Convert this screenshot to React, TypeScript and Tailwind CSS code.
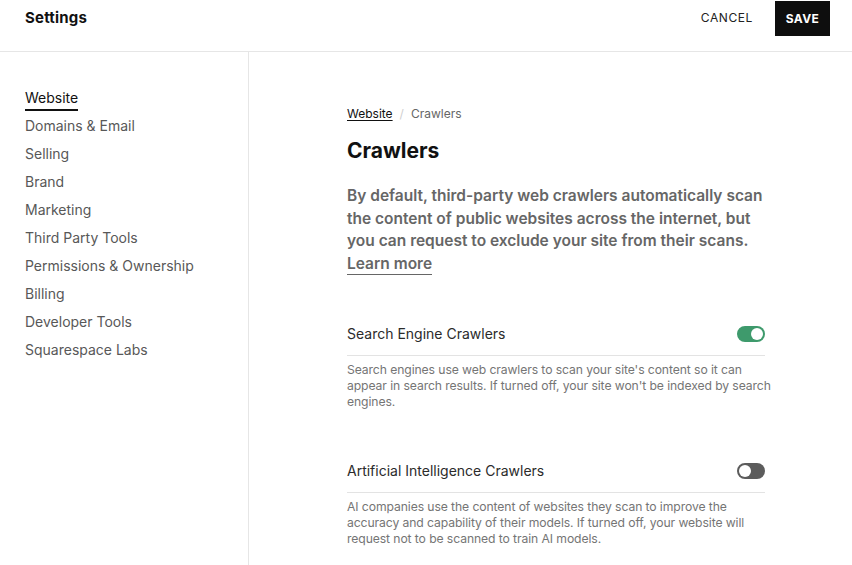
import React from "react";

const nav = [
  "Website",
  "Domains & Email",
  "Selling",
  "Brand",
  "Marketing",
  "Third Party Tools",
  "Permissions & Ownership",
  "Billing",
  "Developer Tools",
  "Squarespace Labs",
];

function Toggle({ on }: { on: boolean }) {
  return (
    <div
      className={`w-[28px] h-[16px] rounded-full flex items-center px-[2px] ${
        on ? "bg-[#3e9a6c] justify-end" : "bg-[#5c5c5c] justify-start"
      }`}
    >
      <div className="w-[12px] h-[12px] rounded-full bg-white" />
    </div>
  );
}

function Section({ title, lines, on }: { title: string; lines: string[]; on: boolean }) {
  return (
    <div>
      <div className="flex items-center justify-between h-[44px] border-b border-[#e3e3e3]">
        <span className="text-[14px] text-[#2b2b2b]">{title}</span>
        <Toggle on={on} />
      </div>
      <p className="mt-[6px] text-[12.2px] tracking-[-0.1px] leading-[16px] text-[#757575]">
        {lines.map((l) => (
          <span key={l} className="block whitespace-nowrap">
            {l}
          </span>
        ))}
      </p>
    </div>
  );
}

export default function App() {
  return (
    <div
      className="w-[852px] h-[565px] bg-white flex flex-col overflow-hidden"
      style={{ fontFamily: "Inter, 'Liberation Sans', sans-serif" }}
    >
      <header className="h-[52px] shrink-0 border-b border-[#e6e6e6] flex items-start justify-between pl-[25px] pr-[22px]">
        <div className="pt-[7px] text-[15px] font-bold text-[#111] tracking-[0.2px]">Settings</div>
        <div className="flex items-start">
          <button className="mt-[9px] mr-[22px] text-[12px] text-[#222] tracking-[0.6px]">CANCEL</button>
          <button className="mt-[1px] w-[55px] h-[35px] bg-[#0e0e0e] text-white text-[12px] font-bold tracking-[0.4px]">
            SAVE
          </button>
        </div>
      </header>
      <div className="flex flex-1 min-h-0">
        <aside className="w-[249px] shrink-0 border-r border-[#e6e6e6] pl-[25px] pt-[36px]">
          <ul className="flex flex-col">
            {nav.map((n, i) => (
              <li key={n} className="h-[28px] flex items-start">
                <span
                  className={`text-[14px] leading-[20px] ${
                    i === 0
                      ? "text-[#111] border-b-2 border-[#111] pb-[1px]"
                      : "text-[#585858]"
                  }`}
                >
                  {n}
                </span>
              </li>
            ))}
          </ul>
        </aside>
        <main className="flex-1 pl-[98px] pt-[54px]">
          <div className="w-[418px]">
            <div className="flex items-center text-[12px] leading-[16px]">
              <span className="text-[#111] underline underline-offset-2">Website</span>
              <span className="mx-[7px] text-[#cfcfcf]">/</span>
              <span className="text-[#666]">Crawlers</span>
            </div>
            <h1 className="mt-[15px] text-[21px] font-bold text-[#111] leading-[28px]">Crawlers</h1>
            <p className="mt-[20px] text-[15.5px] leading-[22.5px] font-semibold text-[#666] w-[430px]">
              By default, third-party web crawlers automatically scan the content of public websites across
              the internet, but you can request to exclude your site from their scans.{" "}
              <span className="border-b border-[#666] pb-[1px]">Learn more</span>
            </p>
            <div className="mt-[37px]">
              <Section
                title="Search Engine Crawlers"
                on={true}
                lines={[
                  "Search engines use web crawlers to scan your site's content so it can",
                  "appear in search results. If turned off, your site won't be indexed by search",
                  "engines.",
                ]}
              />
            </div>
            <div className="mt-[39px]">
              <Section
                title="Artificial Intelligence Crawlers"
                on={false}
                lines={[
                  "AI companies use the content of websites they scan to improve the",
                  "accuracy and capability of their models. If turned off, your website will",
                  "request not to be scanned to train AI models.",
                ]}
              />
            </div>
          </div>
        </main>
      </div>
    </div>
  );
}
